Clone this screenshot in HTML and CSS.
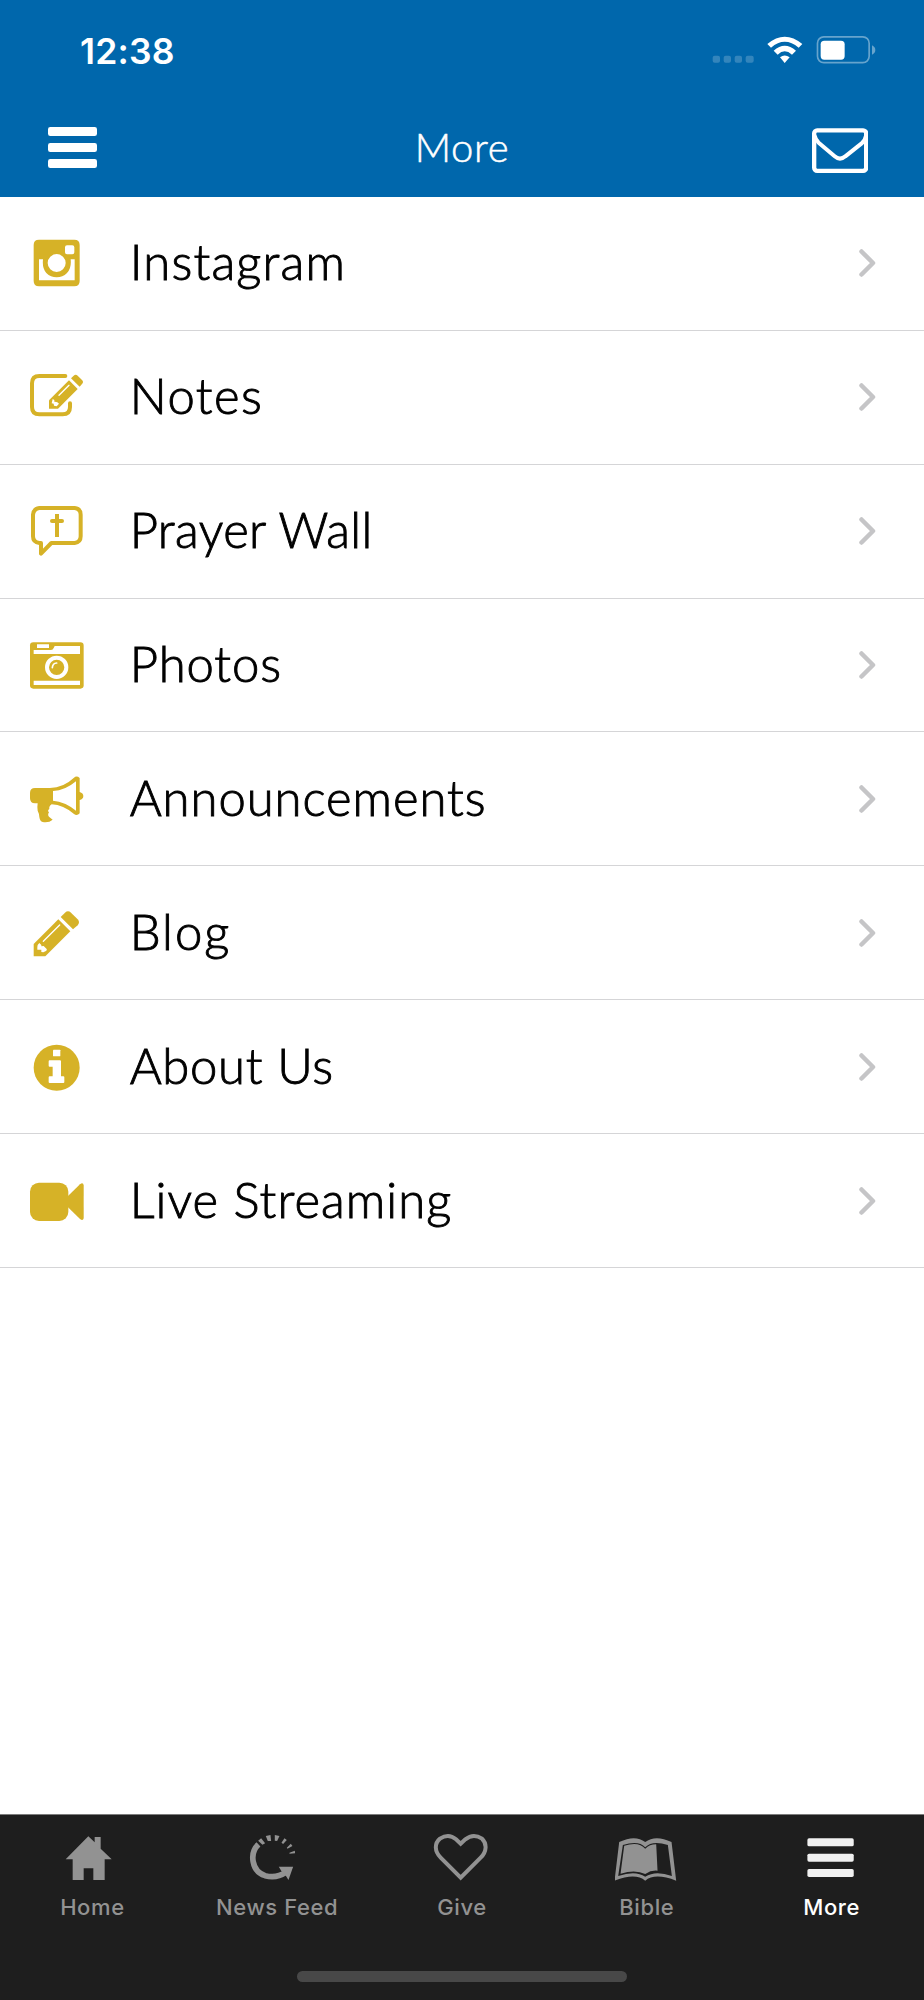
FILE: index.html
```html
<!DOCTYPE html>
<html lang="en">
<head>
<meta charset="utf-8">
<title>More</title>
<link rel="stylesheet" href="styles.css">
</head>
<body>
<div class="app">
  <header class="header">
    <div class="status">
      <span class="time">12:38</span>
      <svg class="status-icons" viewBox="745 100 504 100" fill="#fff">
        <g opacity=".2"><rect x="753" y="168" width="22" height="21" rx="6"/><rect x="786" y="168" width="22" height="21" rx="6"/><rect x="819" y="168" width="22" height="21" rx="6"/><rect x="852" y="168" width="24" height="21" rx="6"/></g>
        <path d="M917 133Q969 89 1022 133L1011 144Q969 109 928 144Z"/>
        <path d="M936 153Q969 123 1003 153L991 165Q969 145 948 165Z"/>
        <path d="M955 173Q969 162 984 173L969 190Z"/>
        <g opacity=".4"><rect x="1067.500" y="111.500" width="155" height="77.500" rx="19" fill="none" stroke="#fff" stroke-width="5"/><path d="M1231 137Q1241 142 1241 151Q1241 161 1231 165Z"/></g>
        <rect x="1077" y="123" width="72" height="57" rx="11"/>
      </svg>
    </div>
    <div class="nav">
      <svg class="nav-menu" viewBox="0 0 147 123" fill="#fff"><rect width="147" height="27" rx="7"/><rect y="48" width="147" height="27" rx="7"/><rect y="96" width="147" height="27" rx="7"/></svg>
      <h1 class="title">More</h1>
      <svg class="nav-mail" viewBox="1050 383 169 136" fill="none" stroke="#fff"><rect x="1056.500" y="390" width="156" height="121.500" rx="9" stroke-width="13"/><path d="M1058 406Q1060 418 1070 427L1118 468Q1134 482 1150 468L1198 430Q1210 420 1212 406" stroke-width="12"/></svg>
    </div>
  </header>

  <main class="list">
    <a class="row">
      <svg class="icon" viewBox="78 101 180 180"><path fill-rule="evenodd" d="M117 121H223Q239 121 239 137V245Q239 261 223 261H117Q101 261 101 245V137Q101 121 117 121ZM201 138Q195 138 195 144V159Q195 165 201 165H217Q223 165 223 159V144Q223 138 217 138ZM117 180V243H224V180H212Q215 207 201 221Q188 234 170 234Q152 234 139 221Q126 207 129 180ZM170 164A27 27 0 1 0 170 218A27 27 0 1 0 170 164Z"/></svg>
      <span class="label l-instagram">Instagram</span>
      <svg class="chev" viewBox="0 0 17 28"><path d="M2.500 2.500L14 14L2.500 25.500"/></svg>
    </a>
    <a class="row">
      <svg class="icon" viewBox="78 502 180 180"><path fill="none" stroke="#d6b227" stroke-width="12" stroke-linecap="round" d="M196 529H118Q96 529 96 551V622Q96 644 118 644H188Q210 644 210 622V611"/><path d="M207 542L233 568L174 627H147V602Z"/><path d="M213 536L221 528Q227 522 233 528L246 541Q252 547 246 553L239 561Z"/><path d="M177 587L207 557" stroke="#fff" stroke-width="4" stroke-linecap="round"/><path fill="#fff" d="M158 598L163 601V606L169 607L172 608L177 612L170 620L162 618L161 612L155 611Z"/></svg>
      <span class="label l-notes">Notes</span>
      <svg class="chev" viewBox="0 0 17 28"><path d="M2.500 2.500L14 14L2.500 25.500"/></svg>
    </a>
    <a class="row">
      <svg class="icon" viewBox="78 93 180 180"><path fill="none" stroke="#d6b227" stroke-width="12" stroke-linejoin="round" d="M118 114H224Q242 116 242 134V199Q242 217 224 219H154L123 251V219H118Q99 217 99 199V134Q101 116 118 114Z"/><path fill="none" stroke="#d6b227" stroke-width="12" d="M171 132V201"/><path fill="none" stroke="#d6b227" stroke-width="12" stroke-linecap="round" d="M156 153H186"/></svg>
      <span class="label l-prayer">Prayer Wall</span>
      <svg class="chev" viewBox="0 0 17 28"><path d="M2.500 2.500L14 14L2.500 25.500"/></svg>
    </a>
    <a class="row">
      <svg class="icon" viewBox="78 495 180 180"><rect x="90" y="517" width="161" height="139" rx="10"/><path fill="#fff" d="M111 523H147V534H111ZM101 540H153Q159 540 161 534L164 528H240V552H101ZM101 632H240V645H101Z"/><circle cx="170" cy="592" r="29" stroke="#fff" stroke-width="12"/><path d="M157 593Q158 580 170 579" fill="none" stroke="#fff" stroke-width="5" stroke-linecap="round"/></svg>
      <span class="label l-photos">Photos</span>
      <svg class="chev" viewBox="0 0 17 28"><path d="M2.500 2.500L14 14L2.500 25.500"/></svg>
    </a>
    <a class="row">
      <svg class="icon" viewBox="78 86 180 180"><path fill-rule="evenodd" d="M105 143H150Q190 142 222 112Q230 105 239 113V155Q250 158 250 167Q250 176 239 179V219Q231 228 222 221Q190 194 155 192Q146 198 148 206Q141 211 147 216Q142 224 147 229L158 238Q147 248 128 245Q120 243 118 230Q117 218 113 211Q111 203 113 189H105Q90 189 90 174V158Q90 143 105 143ZM159 152V181Q195 184 228 211V123Q195 151 159 152Z"/></svg>
      <span class="label l-announce">Announcements</span>
      <svg class="chev" viewBox="0 0 17 28"><path d="M2.500 2.500L14 14L2.500 25.500"/></svg>
    </a>
    <a class="row">
      <svg class="icon" viewBox="78 488 180 180"><path d="M175 537L211 573L136 648H101V611Z"/><path d="M182 530L195 517Q204 509 213 517L233 537Q241 546 233 555L219 567Z"/><path d="M130 603L179 554" stroke="#fff" stroke-width="4" stroke-linecap="round"/><path fill="#fff" d="M118 608L124 614V618L131 617L140 626Q142 629 138 632L130 636L124 635V628H112V620Q111 614 118 608Z"/></svg>
      <span class="label l-blog">Blog</span>
      <svg class="chev" viewBox="0 0 17 28"><path d="M2.500 2.500L14 14L2.500 25.500"/></svg>
    </a>
    <a class="row">
      <svg class="icon" viewBox="78 79 180 180"><circle cx="170" cy="171" r="69"/><g fill="#fff"><rect x="159" y="117" width="22" height="20" rx="2"/><path d="M149 149H180Q183 149 183 152V197H190Q193 197 193 200V214Q193 217 190 217H149Q146 217 146 214V200Q146 197 149 197H158V168H149Q146 168 146 165V152Q146 149 149 149Z"/></g></svg>
      <span class="label l-about">About Us</span>
      <svg class="chev" viewBox="0 0 17 28"><path d="M2.500 2.500L14 14L2.500 25.500"/></svg>
    </a>
    <a class="row">
      <svg class="icon" viewBox="78 481 180 180"><rect x="90" y="516" width="115" height="115" rx="27"/><path d="M204 556L240 521Q249 514 251 523V623Q249 632 240 625L204 590Z"/></svg>
      <span class="label l-live">Live Streaming</span>
      <svg class="chev" viewBox="0 0 17 28"><path d="M2.500 2.500L14 14L2.500 25.500"/></svg>
    </a>
  </main>

  <footer class="footer">
    <nav class="tabs">
      <a class="tab"><svg class="tab-icon" viewBox="181 95 192 156"><path d="M198 177L266 108L285 126V110H303V145L336 177H315V239H281V204H252V239H219V177Z"/></svg><span>Home</span></a>
      <a class="tab"><svg class="tab-icon" viewBox="735.600 95 192 156"><path fill="none" stroke="#929292" stroke-width="17" d="M776 132C748 158 755 213 796 226Q830 235 857 216"/><path d="M837 199H880L866 239L859 228L845 213Z"/><path d="M775 121L784 114L796 129L788 133ZM798 107L812 104L814 122H804ZM825 104L839 107L832 122L825 121ZM854 114L861 119L850 131L845 127ZM873 130L878 137L863 145L861 142ZM885 151L886 159L869 160V157Z"/></svg><span>News Feed</span></a>
      <a class="tab"><svg class="tab-icon" viewBox="1290 95 192 156"><path fill="none" stroke="#929292" stroke-width="12" d="M1382 232L1322 172C1303 153 1303 129 1320 115Q1346 98 1368 117L1382 130L1396 117Q1420 98 1446 115C1461 129 1461 153 1442 172Z"/></svg><span>Give</span></a>
      <a class="tab"><svg class="tab-icon" viewBox="458.400 95 192 156"><path fill-rule="evenodd" d="M471 125Q519 102 549 125Q580 102 628 125L642 241Q578 216 549 241Q520 216 457 241ZM482 134L468 227Q520 209 549 229Q580 209 629 227L617 134Q570 119 549 141Q530 119 482 134Z"/><path d="M486 136Q530 122 549 145Q562 132 582 132L586 211Q567 209 549 221Q520 206 475 220Z"/></svg><span>Bible</span></a>
      <a class="tab active"><svg class="tab-icon" viewBox="1012.800 95 192 156"><rect x="1035" y="114" width="139" height="24" rx="5"/><rect x="1035" y="160" width="139" height="24" rx="5"/><rect x="1035" y="206" width="139" height="24" rx="5"/></svg><span>More</span></a>
    </nav>
    <div class="home-bar"></div>
  </footer>
</div>
</body>
</html>
```
FILE: styles.css
```css
* { box-sizing: border-box; }
body { margin: 0; background: #fff; }
.app { display: flex; flex-direction: column; width: 924px; height: 2000px; background: #fff; }

.header { height: 196.7px; background: #0067ac; color: #fff; }
.status { display: flex; justify-content: space-between; align-items: center; height: 100px; padding: 0 46px 0 80px; }
.time { font: 600 35.5px/40px Inter, sans-serif; padding-top: 4px; letter-spacing: .2px; }
.status-icons { width: 168px; height: 33.33px; }
.nav { display: grid; grid-template-columns: 1fr auto 1fr; align-items: center; height: 96px; padding: 0 56px 0 48px; }
.nav-menu { width: 49px; height: 41px; margin-bottom: 2px; }
.title { margin: 0; padding: 0 0 3px 8px; font: 300 40px/48px Lato, sans-serif; letter-spacing: .7px; -webkit-text-stroke: .5px #fff; }
.nav-mail { width: 56.33px; height: 45.33px; justify-self: end; margin-top: 5px; }

.list { flex: 1; }
.row { display: flex; align-items: center; height: 133.94px; padding: 0 48.5px 0 26px; border-bottom: 1px solid #d5d5d7; }
.icon { width: 60px; height: 60px; fill: #d6b227; }
.label { flex: 1; margin-left: 43.7px; padding-bottom: 3px; font: 300 49px/59px Lato, sans-serif; color: #000; -webkit-text-stroke: .9px #000; }
.l-instagram { letter-spacing: 1.2px; }
.l-notes { letter-spacing: 1.5px; }
.l-prayer { letter-spacing: .4px; }
.l-photos { letter-spacing: .9px; }
.l-announce { letter-spacing: .95px; }
.l-blog { letter-spacing: 2px; }
.l-about { letter-spacing: .7px; }
.l-live { letter-spacing: 1.05px; }
.chev { width: 17px; height: 28px; fill: none; stroke: #c5c5c7; stroke-width: 4.5px; stroke-linecap: round; stroke-linejoin: round; }

.footer { display: flex; flex-direction: column; align-items: center; height: 186px; background: #1e1e1e; border-top: 1px solid #7c7c7c; }
.tabs { display: grid; grid-template-columns: repeat(5, 1fr); width: 100%; padding-top: 16.7px; }
.tab { display: flex; flex-direction: column; align-items: center; color: #929292; font: 450 22px/28px Inter, sans-serif; letter-spacing: .6px; }
.tab-icon { width: 64px; height: 52px; margin-bottom: 9.5px; fill: #929292; }
.active { color: #fff; }
.active .tab-icon { fill: #f0f0f0; }
.home-bar { width: 330px; height: 11px; margin-top: 50px; border-radius: 6px; background: #484848; }
```
